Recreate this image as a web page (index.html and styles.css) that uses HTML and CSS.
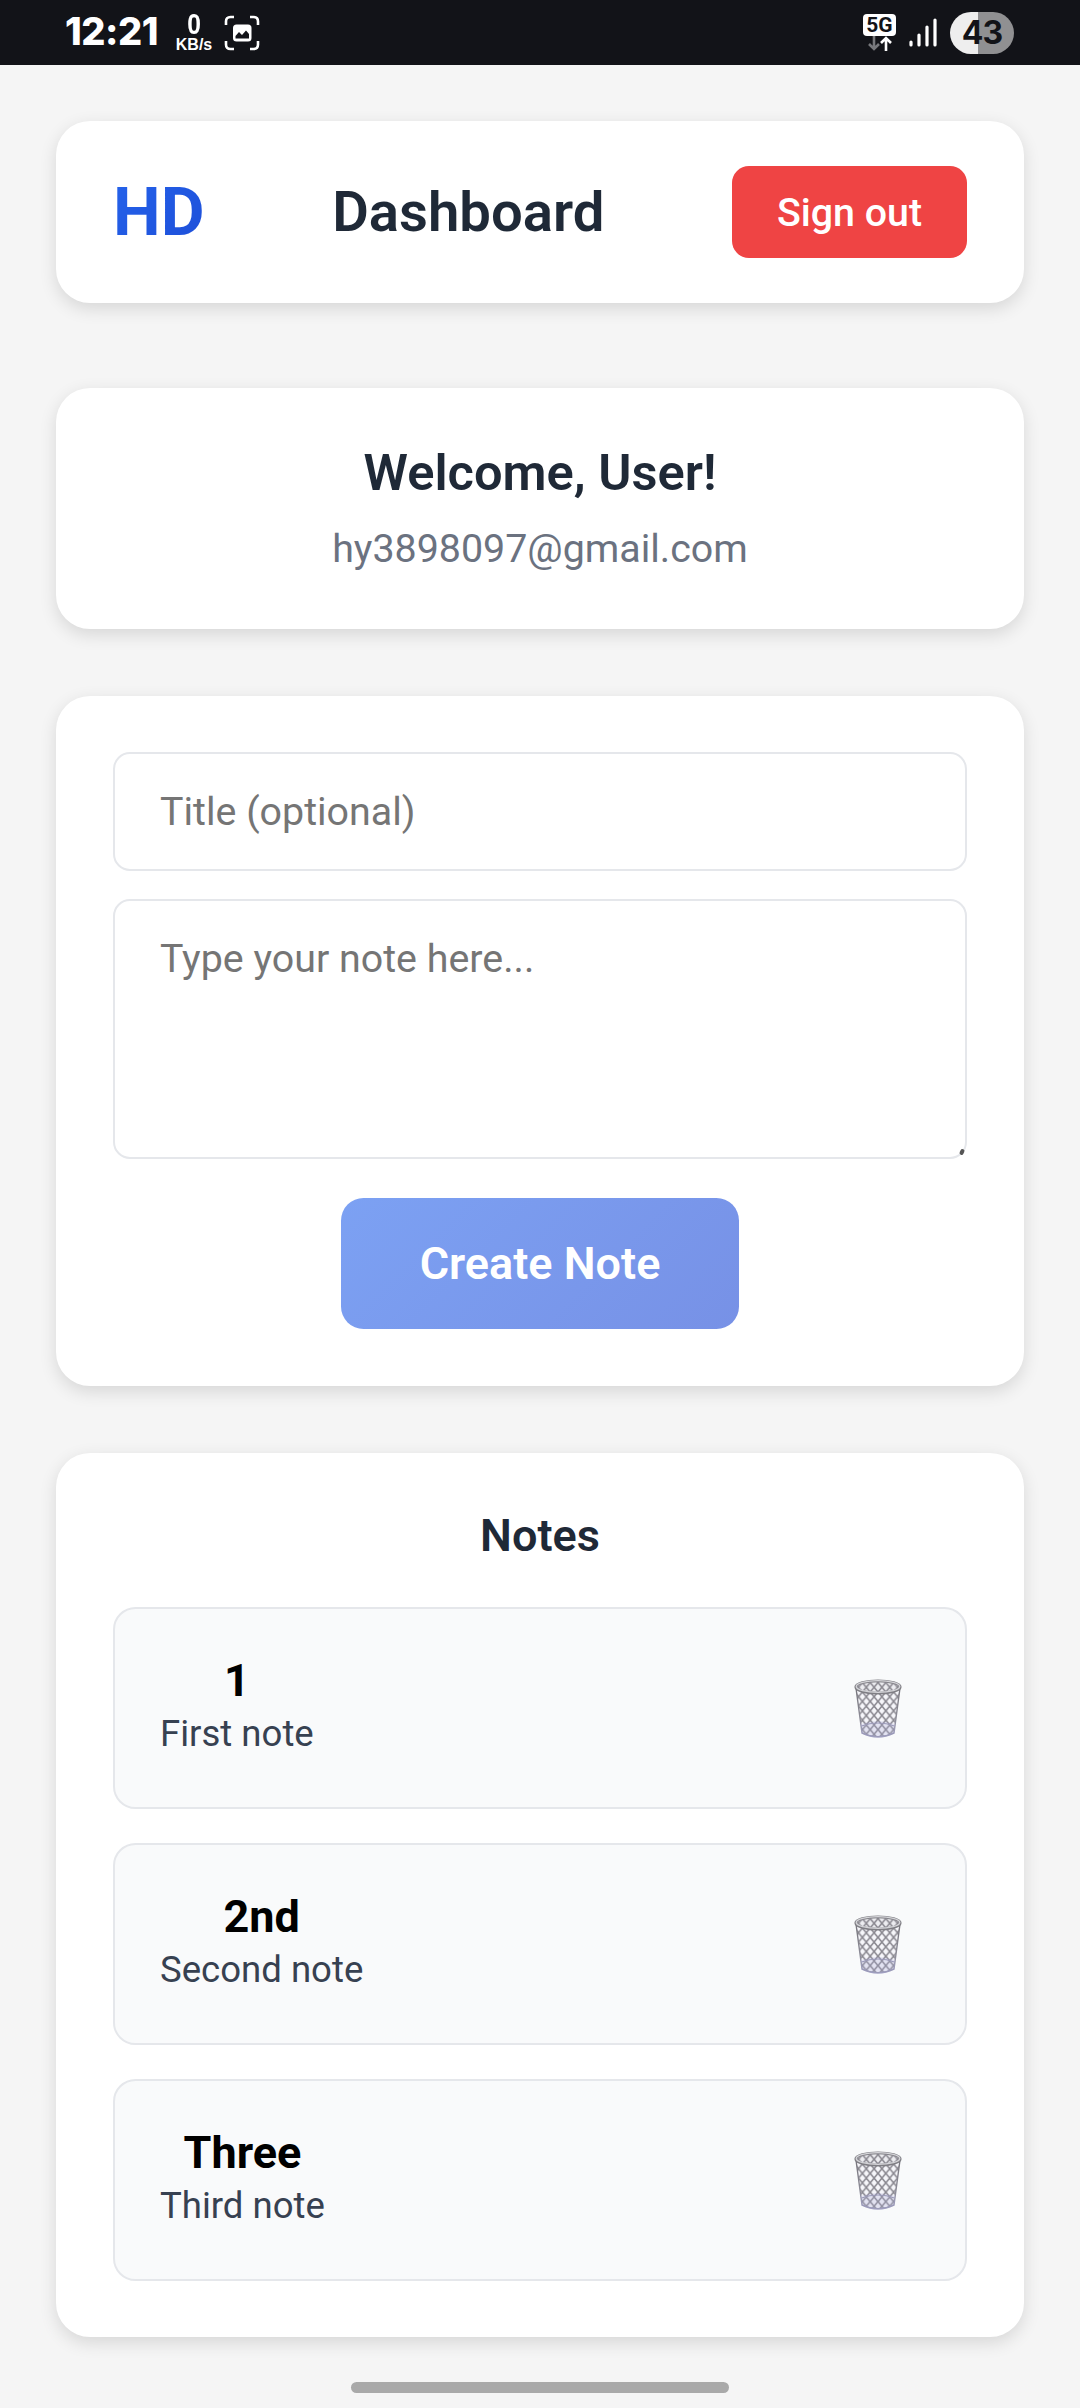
FILE: index.html
```html
<!DOCTYPE html>
<html lang="en">
<head>
<meta charset="utf-8">
<title>Dashboard</title>
<link rel="stylesheet" href="styles.css">
</head>
<body>
<svg class="defs" aria-hidden="true">
  <defs>
    <linearGradient id="rim" x1="0" y1="0" x2="0" y2="1">
      <stop offset="0" stop-color="#77757c"/><stop offset=".65" stop-color="#8d8c98"/><stop offset="1" stop-color="#a3a2c4"/>
    </linearGradient>
    <pattern id="mesh" width="7.8" height="9.4" patternUnits="userSpaceOnUse" x="1.6" y="14">
      <path d="M-1 -1.2L8.8 10.6M8.8 -1.2L-1 10.6" stroke="#89878f" stroke-width="1.6"/>
    </pattern>
    <symbol id="basket" viewBox="0 0 50 62">
      <path d="M3 10L9 55Q25 63 41 55L47 10Q25 20 3 10Z" fill="#f6f6fa"/>
      <path d="M3 10L9 55Q25 63 41 55L47 10Q25 20 3 10Z" fill="url(#mesh)" stroke="url(#rim)" stroke-width="1.4"/>
      <path d="M8 46Q25 40 42 46L41 55Q25 63 9 55Z" fill="#a9a7d8" opacity=".25"/>
      <path d="M8.500 48Q25 42 41.500 48M9 55Q25 62 41 55" fill="none" stroke="#9b9ab8" stroke-width="1.2"/>
      <ellipse cx="25" cy="9" rx="22.200" ry="6.200" fill="#ececf0" stroke="#7f7e84" stroke-width="2.800"/>
      <ellipse cx="25" cy="8.500" rx="21.800" ry="5.800" fill="url(#mesh)" stroke="#d4d4d8" stroke-width="1.300"/>
    </symbol>
  </defs>
</svg>
<div class="status">
  <div class="status-left">
    <span class="clock">12:21</span>
    <span class="speed"><b>0</b><small>KB/s</small></span>
    <svg class="shot" viewBox="0 0 36 36" fill="none">
      <path d="M2 10V6.500Q2 2 6.500 2H10M26 2H29.500Q34 2 34 6.500V10M34 26V29.500Q34 34 29.500 34H26M10 34H6.500Q2 34 2 29.500V26" stroke="#fff" stroke-width="2.600"/>
      <rect x="9" y="9.500" width="18.500" height="17" rx="3.500" fill="#fff"/>
      <path d="M11.500 23.500V21L15 17L18 20L22 15.500L25 19V23.500Z" fill="#121318"/>
    </svg>
  </div>
  <div class="status-right">
    <div class="network">
      <span>5G</span>
      <svg viewBox="0 0 26 15" fill="none" stroke-width="2.600"><path d="M7 0V13M2 8L7 13L12 8" stroke="#77787c"/><path d="M19 15V2M14 7L19 2L24 7" stroke="#fff"/></svg>
    </div>
    <svg class="signal" viewBox="0 0 28 30" stroke="#fff" stroke-width="3.200" stroke-linecap="round"><path d="M2 24V27M10 17V27M18 9V27M26 2V27"/></svg>
    <span class="battery">43</span>
  </div>
</div>
<main class="page">
  <header class="card header">
    <span class="logo">HD</span>
    <h1>Dashboard</h1>
    <button class="signout">Sign out</button>
  </header>
  <section class="card welcome">
    <h2>Welcome, User!</h2>
    <p>hy3898097@gmail.com</p>
  </section>
  <section class="card form">
    <input class="field title" placeholder="Title (optional)">
    <div class="note-box">
      <textarea class="field body" placeholder="Type your note here..."></textarea>
      <i class="grip"></i>
    </div>
    <button class="create">Create Note</button>
  </section>
  <section class="card notes">
    <h3>Notes</h3>
    <article class="note">
      <div><h4>1</h4><p>First note</p></div>
      <svg class="trash"><use href="#basket"/></svg>
    </article>
    <article class="note">
      <div><h4>2nd</h4><p>Second note</p></div>
      <svg class="trash"><use href="#basket"/></svg>
    </article>
    <article class="note">
      <div><h4>Three</h4><p>Third note</p></div>
      <svg class="trash"><use href="#basket"/></svg>
    </article>
  </section>
</main>
<div class="home-bar"></div>
</body>
</html>
```
FILE: styles.css
```css
* { box-sizing: border-box; margin: 0; padding: 0; }
body {
  width: 1080px; height: 2408px; overflow: hidden;
  background: #f5f5f5; color: #1f2937;
  font-family: Roboto, sans-serif;
  display: flex; flex-direction: column; align-items: center;
}
button, input, textarea { font-family: inherit; border: 0; outline: 0; display: block; }
.defs { position: absolute; width: 0; height: 0; }

.status {
  width: 1080px; height: 65px; flex: none; background: #121318; color: #fff;
  display: flex; justify-content: space-between; padding: 0 66px 0 65px;
  font-family: Inter, sans-serif;
}
.status-left, .status-right { display: flex; align-items: center; }
.clock { font-size: 38px; font-weight: 800; line-height: 63px; width: 94px; height: 65px; white-space: nowrap; letter-spacing: -0.5px; }
.speed { width: 40px; margin-left: 15px; display: flex; flex-direction: column; align-items: center; font-family: "Liberation Sans", sans-serif; }
.speed b { font-size: 29px; line-height: 25px; transform: scaleX(.85); }
.speed small { font-size: 16px; line-height: 16px; font-weight: 700; }
.shot { width: 36px; height: 36px; margin-left: 10px; }
.network { display: flex; flex-direction: column; align-items: center; width: 33px; margin-right: 13px; }
.network span {
  width: 33px; height: 22px; border-radius: 4px; background: #fff; color: #121318;
  font-family: Roboto, sans-serif; font-size: 21px; font-weight: 700; line-height: 22px; text-align: center;
}
.network svg { width: 26px; height: 15px; }
.signal { width: 28px; height: 30px; margin-right: 13px; }
.battery {
  width: 64px; height: 42px; border-radius: 21px; text-align: center;
  background: linear-gradient(90deg, #eee 43%, #909092 43%);
  color: #121318; font-size: 32px; font-weight: 700; line-height: 42px; letter-spacing: -1px;
}

.page { width: 968px; padding-top: 56px; display: flex; flex-direction: column; }
.card { background: #fff; border-radius: 34px; box-shadow: 0 5.600px 17px rgba(0, 0, 0, .12); }
.header { height: 182px; padding: 0 57px; display: flex; align-items: center; justify-content: space-between; }
.logo {
  font-size: 67.500px; font-weight: 700; line-height: 80px;
  background: linear-gradient(135deg, #2563eb, #1d4ed8); -webkit-background-clip: text; background-clip: text; color: transparent;
}
h1 { font-size: 56.250px; font-weight: 600; line-height: 66px; }
.signout { width: 235px; height: 92px; border-radius: 17px; background: #ef4444; color: #fff; font-size: 39.375px; font-weight: 500; }
.welcome { height: 241px; margin-top: 85px; padding-top: 55px; text-align: center; }
.welcome h2 { font-size: 50.625px; font-weight: 600; line-height: 59px; }
.welcome p { margin-top: 24px; font-size: 39.375px; line-height: 46px; color: #6b7280; }
.form { height: 690px; margin-top: 67px; padding: 56px 57px; display: flex; flex-direction: column; align-items: center; }
.field { width: 854px; border: 2px solid #e5e7eb; border-radius: 17px; background: #fff; font-size: 39.375px; line-height: 46px; color: #1f2937; resize: none; }
.field::placeholder { color: #757575; }
.title { height: 119px; padding: 0 45px; }
.note-box { position: relative; margin-top: 28px; }
.body { height: 260px; padding: 35px 45px; overflow: hidden; }
.grip { position: absolute; right: 3px; bottom: 4px; width: 4px; height: 6px; border-radius: 2px; background: #555; transform: rotate(25deg); }
.create {
  width: 398px; height: 131px; margin-top: 39px; border-radius: 22.500px;
  background: linear-gradient(135deg, #7ca1f3, #7791e6); color: #fff; font-size: 45px; font-weight: 600;
}
.notes { height: 884px; margin-top: 67px; padding: 56px 57px; display: flex; flex-direction: column; text-align: center; }
.notes h3 { font-size: 45px; font-weight: 600; line-height: 53px; margin-bottom: 45px; }
.note {
  height: 202px; flex: none; margin-bottom: 34px; padding: 45px 62px 0 45px; background: #f9fafb; border: 2px solid #e5e7eb; border-radius: 22.500px;
  display: flex; justify-content: space-between;
}
.note h4 { font-size: 45px; font-weight: 700; line-height: 53px; color: #000; }
.note p { margin-top: 5px; font-size: 36.560px; line-height: 43px; color: #374151; }
.trash { width: 50px; height: 62px; margin-top: 24px; }
.home-bar { width: 378px; height: 11px; margin-top: 45px; flex: none; border-radius: 6px; background: #a9a9a9; }
```
